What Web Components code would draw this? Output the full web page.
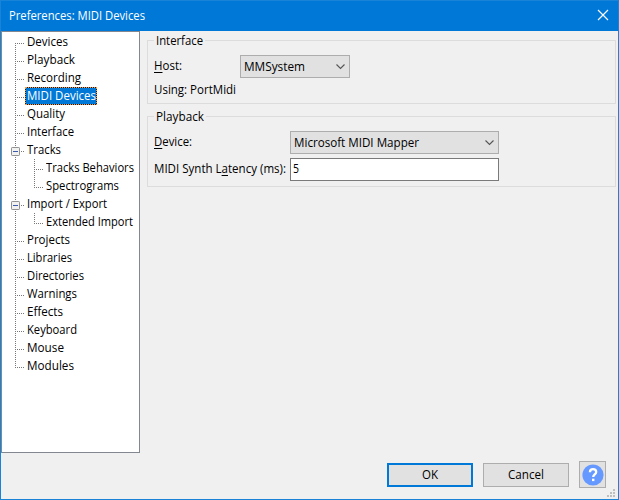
<!DOCTYPE html>
<html lang="en"><head><meta charset="utf-8"><title>Preferences: MIDI Devices</title>
<style>
html,body{margin:0;width:619px;height:500px;overflow:hidden}
body{font:12px/18px "Open Sans","Noto Sans",sans-serif;color:#000}
</style></head><body>
<pref-window></pref-window>
<script>
const define=(name,html,setup)=>customElements.define(name,class extends HTMLElement{
  connectedCallback(){
    if(this.shadowRoot)return;
    this.attachShadow({mode:'open'}).innerHTML=html;
    if(setup)setup(this,this.shadowRoot);
  }
});

// Single-line text condensed horizontally to fill a given width.
define('ui-text',`<style>:host{display:inline-block;white-space:pre;vertical-align:top}span{display:inline-block;transform-origin:0 0}</style><span><slot></slot></span>`,(el,root)=>{
  const span=root.querySelector('span'),w=+el.getAttribute('w');
  if(!w)return;
  span.style.transform='scaleX('+w/span.getBoundingClientRect().width+')';
  el.style.width=w+'px';
});

define('tree-item',`<style>
:host{display:flex;height:18px;box-sizing:border-box;padding-left:10px;position:relative;line-height:18px}
.trunk,.twig{position:absolute;pointer-events:none}
.trunk{left:0;top:0;width:1px;height:18px;background:repeating-linear-gradient(#777 0 1px,transparent 1px 2px)}
.twig{left:0;top:10px;width:9px;height:1px;background:repeating-linear-gradient(90deg,#777 0 1px,transparent 1px 2px)}
:host([first]) .trunk{top:10px;height:8px}
:host([last]) .trunk{height:10px}
.box{display:none;position:absolute;left:-4px;top:6px;width:9px;height:9px}
:host([open]) .box{display:block}
.label{height:18px;padding:0 2px;box-sizing:border-box}
:host([selected]) .label{background:#0078d7;color:#fff;outline:1px dotted #ff9a40;outline-offset:-1px;box-shadow:inset 0 0 0 1px #00203c;width:72px}
</style><i class="trunk"></i><i class="twig"></i>
<svg class="box" viewBox="0 0 9 9"><rect x=".5" y=".5" width="8" height="8" rx=".7" fill="#f1f1f1" stroke="#919191"/><path d="M2 4.5h5" stroke="#3c5aaa"/></svg>
<div class="label"><slot></slot></div>`);

// Nested rows; the parent's dotted trunk runs alongside them.
define('tree-branch',`<style>:host{display:block;padding-left:19px;background:repeating-linear-gradient(#777 0 1px,transparent 1px 2px) 0 0/1px 100% no-repeat}</style><slot></slot>`);

define('pref-tree',`<style>:host{display:block;box-sizing:border-box;width:139px;height:422px;border:1px solid #828790;background:#fff;padding:1px 0 0 13px}</style><slot></slot>`);

define('group-box',`<style>
:host{display:block;box-sizing:border-box;border:1px solid #dcdcdc;position:relative}
.caption{position:absolute;left:6px;top:-9px;background:#f0f0f0;padding:0 2px;line-height:18px}
</style><div class="caption"><slot name="caption"></slot></div><slot></slot>`);

define('field-row',`<style>:host{display:flex;height:23px;padding-left:6px}.label{flex:none;width:var(--label,136px);line-height:22px}</style><div class="label"><slot name="label"></slot></div><slot></slot>`);

define('combo-box',`<style>:host{display:flex;justify-content:space-between;box-sizing:border-box;height:23px;border:1px solid #adadad;background:#e1e1e1;padding:0 4px 0 3px;line-height:22px}svg{margin-top:7px}</style><slot></slot><svg width="9" height="7" viewBox="0 0 9 7"><path d="M.5 1.5l4 4 4-4" fill="none" stroke="#555" stroke-width="1.1"/></svg>`);

define('text-box',`<style>:host{display:block;box-sizing:border-box;height:23px;border:1px solid #7a7a7a;background:#fff;padding-left:2px;line-height:20px}</style><slot></slot>`);

define('push-button',`<style>:host{display:flex;justify-content:center;align-items:center;box-sizing:border-box;width:86px;height:24px;border:1px solid #adadad;background:#e1e1e1;line-height:22px}:host([primary]){border:2px solid #0078d7}:host([icon]){width:27px;height:27px}</style><slot></slot>`);

define('pref-window',`<style>
:host{display:flex;flex-direction:column;box-sizing:border-box;width:619px;height:500px;border:1px solid #1883d7;border-top:0;background:#f0f0f0;position:relative}
header{height:31px;flex:none;box-sizing:border-box;border-top:1px solid #1883d7;background:#0078d7;color:#fff;display:flex;justify-content:space-between;padding:5px 9px 0 8px;line-height:20px}
header svg{margin-top:3px}
main{display:flex;height:422px}
section{padding:9px 0 0 7px;flex:none;width:469px}
#a{height:64px;padding-top:14px}#b{height:71px;margin-top:12px;padding-top:14px}
#a field-row{--label:86px}
.using{padding:3px 0 0 6px}
u{text-decoration:underline;text-underline-offset:1.5px;text-decoration-thickness:1px;text-decoration-skip-ink:none}
footer{display:flex;gap:10px;align-items:center;padding:8px 0 0 386px;height:27px}
.grip{position:absolute;right:3px;bottom:2px}
</style>
<header><ui-text w="136">Preferences: MIDI Devices</ui-text><svg width="12" height="12" viewBox="0 0 12 12"><path d="M1 1l10 10M11 1L1 11" stroke="#fff" stroke-width="1.15"/></svg></header>
<main><pref-tree>
<tree-item first><ui-text w="41">Devices</ui-text></tree-item>
<tree-item><ui-text w="48">Playback</ui-text></tree-item>
<tree-item><ui-text w="54">Recording</ui-text></tree-item>
<tree-item selected><ui-text w="69">MIDI Devices</ui-text></tree-item>
<tree-item><ui-text w="38">Quality</ui-text></tree-item>
<tree-item><ui-text w="47">Interface</ui-text></tree-item>
<tree-item open><ui-text w="34">Tracks</ui-text></tree-item>
<tree-branch><tree-item><ui-text w="88">Tracks Behaviors</ui-text></tree-item>
<tree-item last><ui-text w="73">Spectrograms</ui-text></tree-item></tree-branch>
<tree-item open><ui-text w="80">Import / Export</ui-text></tree-item>
<tree-branch><tree-item last><ui-text w="87">Extended Import</ui-text></tree-item></tree-branch>
<tree-item><ui-text w="43">Projects</ui-text></tree-item>
<tree-item><ui-text w="45">Libraries</ui-text></tree-item>
<tree-item><ui-text w="57">Directories</ui-text></tree-item>
<tree-item><ui-text w="50">Warnings</ui-text></tree-item>
<tree-item><ui-text w="36">Effects</ui-text></tree-item>
<tree-item><ui-text w="50">Keyboard</ui-text></tree-item>
<tree-item><ui-text w="37">Mouse</ui-text></tree-item>
<tree-item last><ui-text w="47">Modules</ui-text></tree-item>
</pref-tree>
<section>
<group-box id="a"><ui-text slot="caption" w="47">Interface</ui-text>
<field-row><ui-text slot="label" w="28"><u>H</u>ost:</ui-text><combo-box style="width:110px"><ui-text w="61">MMSystem</ui-text></combo-box></field-row>
<div class="using"><ui-text w="82">Using: PortMidi</ui-text></div></group-box>
<group-box id="b"><ui-text slot="caption" w="48">Playback</ui-text>
<field-row><ui-text slot="label" w="38"><u>D</u>evice:</ui-text><combo-box style="width:209px"><ui-text w="125">Microsoft MIDI Mapper</ui-text></combo-box></field-row>
<field-row style="margin-top:4px"><ui-text slot="label" w="132">MIDI Synth L<u>a</u>tency (ms):</ui-text><text-box style="width:209px"><ui-text w="6">5</ui-text></text-box></field-row></group-box>
</section></main>
<footer><push-button primary><ui-text w="16">OK</ui-text></push-button><push-button><ui-text w="36">Cancel</ui-text></push-button>
<push-button icon><svg width="22" height="22" viewBox="0 0 22 22"><circle cx="11" cy="11" r="10.6" fill="#6699ff"/><path d="M7.9 8.3C8 6 9.200 5.200 11 5.200c1.900 0 3.200 1 3.200 2.700 0 2.400-3 2.500-3 5.100" fill="none" stroke="#fff" stroke-width="2.3"/><rect x="10" y="14.700" width="2.400" height="2.400" fill="#fff"/></svg></push-button></footer>
<svg class="grip" width="8" height="8" viewBox="0 0 8 8" fill="#bfbfbf"><path d="M6 0h2v2H6zM3 3h2v2H3zM6 3h2v2H6zM0 6h2v2H0zM3 6h2v2H3zM6 6h2v2H6z"/></svg>`);
</script></body></html>
